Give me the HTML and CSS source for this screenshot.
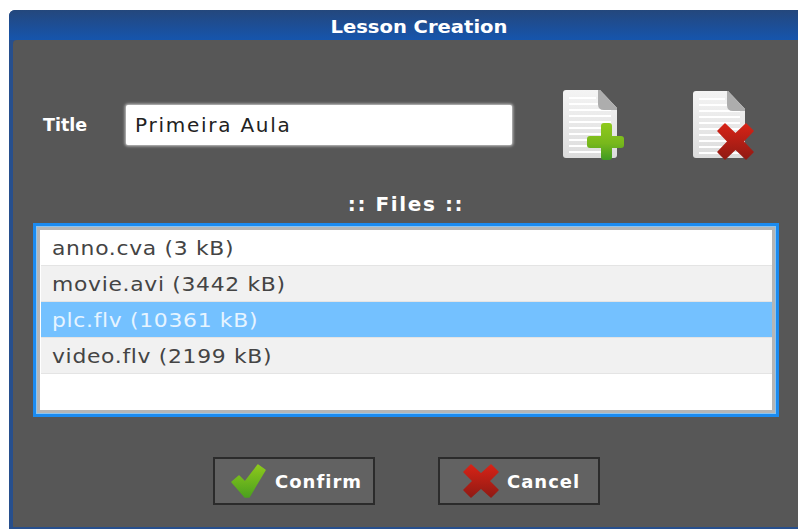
FILE: index.html
```html
<!DOCTYPE html>
<html lang="en">
<head>
<meta charset="utf-8">
<title>Lesson Creation</title>
<link rel="stylesheet" href="styles.css">
</head>
<body>
<div class="dialog">
  <header class="titlebar"><span class="titlebar-text">Lesson Creation</span></header>
  <main class="panel">
    <div class="title-row">
      <label class="title-label" for="lesson-title">Title</label>
      <input class="title-input" id="lesson-title" value="Primeira Aula">
      <div class="file-actions">
        <svg class="doc-icon" viewBox="0 0 62 70" width="62" height="70">
          <defs>
            <linearGradient id="greenA" gradientUnits="userSpaceOnUse" x1="0" y1="33" x2="0" y2="70"><stop offset="0" stop-color="#8fca1c"/><stop offset="0.55" stop-color="#78b81c"/><stop offset="1" stop-color="#3f9a22"/></linearGradient>
            <linearGradient id="pageA" x1="0" y1="0" x2="0" y2="1"><stop offset="0" stop-color="#f4f4f4"/><stop offset="1" stop-color="#dcdcdc"/></linearGradient>
          </defs>
          <path d="M4 0H38L55 18V65Q55 68 52 68H4Q1 68 1 65V3Q1 0 4 0Z" fill="url(#pageA)"/>
          <path d="M7 8H34M7 14H36M7 20H49M7 26H49M7 32H49M7 38H49M7 44H49M7 50H49M7 56H49M7 62H49" stroke="#fff" stroke-width="2.2"/>
          <path d="M36 0H38L55 18V20H42Q36 20 36 14Z" fill="#adadad"/>
          <g fill="url(#greenA)">
            <rect x="25" y="46" width="37" height="12" rx="3"/>
            <rect x="39" y="33" width="11" height="37" rx="3"/>
          </g>
        </svg>
        <svg class="doc-icon" viewBox="0 0 62 70" width="62" height="70">
          <defs>
            <linearGradient id="redA" gradientUnits="userSpaceOnUse" x1="0" y1="33" x2="0" y2="70"><stop offset="0" stop-color="#d92316"/><stop offset="1" stop-color="#8e1a14"/></linearGradient>
            <linearGradient id="pageB" x1="0" y1="0" x2="0" y2="1"><stop offset="0" stop-color="#f4f4f4"/><stop offset="1" stop-color="#dcdcdc"/></linearGradient>
          </defs>
          <path d="M4 1H36L53 19V65Q53 68 50 68H4Q1 68 1 65V4Q1 1 4 1Z" fill="url(#pageB)"/>
          <path d="M7 9H33M7 15H35M7 21H48M7 27H48M7 33H48M7 39H48M7 45H48M7 51H48M7 57H48M7 63H48" stroke="#fff" stroke-width="2.2"/>
          <path d="M35 1H36L53 19V21H41Q35 21 35 15Z" fill="#adadad"/>
          <path d="M26 41L33 34L43.500 44L54 34L61 41L51 51.500L61 62L54 69L43.500 59L33 69L26 62L36 51.500Z" fill="url(#redA)" stroke="url(#redA)" stroke-width="1.500" stroke-linejoin="round"/>
        </svg>
      </div>
    </div>
    <h2 class="files-heading">:: Files ::</h2>
    <ul class="file-list">
      <li class="file-row"><span class="file-name">anno.cva (3 kB)</span></li>
      <li class="file-row alt"><span class="file-name">movie.avi (3442 kB)</span></li>
      <li class="file-row selected"><span class="file-name">plc.flv (10361 kB)</span></li>
      <li class="file-row alt"><span class="file-name">video.flv (2199 kB)</span></li>
    </ul>
    <div class="buttons">
      <button class="btn btn-confirm" type="button">
        <svg viewBox="0 0 36 34" width="36" height="34">
          <defs><linearGradient id="greenB" gradientUnits="userSpaceOnUse" x1="0" y1="0" x2="0" y2="34"><stop offset="0" stop-color="#8fca1c"/><stop offset="1" stop-color="#4aa01e"/></linearGradient></defs>
          <path d="M1 18L8 12L14 18L27 1L34 6L18 33H14Z" fill="url(#greenB)" stroke="url(#greenB)" stroke-width="1.500" stroke-linejoin="round"/>
        </svg>
        Confirm
      </button>
      <button class="btn btn-cancel" type="button">
        <svg viewBox="0 0 36 34" width="36" height="34">
          <defs><linearGradient id="redB" gradientUnits="userSpaceOnUse" x1="0" y1="0" x2="0" y2="34"><stop offset="0" stop-color="#d92316"/><stop offset="1" stop-color="#8e1a14"/></linearGradient></defs>
          <path d="M1 8L8 1L18 10L28 1L35 8L26 17L35 26L28 33L18 24L8 33L1 26L10 17Z" fill="url(#redB)" stroke="url(#redB)" stroke-width="1.500" stroke-linejoin="round"/>
        </svg>
        Cancel
      </button>
    </div>
  </main>
</div>
</body>
</html>
```

FILE: styles.css
```css
html, body {
  margin: 0;
  height: 100%;
  background: #fff;
  overflow: hidden;
}

body {
  padding: 10px 0 0 9px;
  box-sizing: border-box;
  font-family: "DejaVu Sans", sans-serif;
}

.dialog {
  height: 519px;
  display: flex;
  flex-direction: column;
  border-radius: 6px 0 0 0;
  overflow: hidden;
  background: #274f8d;
  padding: 0 0 2px 4px;
  box-sizing: border-box;
}

.titlebar {
  flex: none;
  height: 30px;
  margin-left: -4px;
  display: flex;
  align-items: center;
  justify-content: center;
  padding: 3px 0 0 31px;
  box-sizing: border-box;
  background: linear-gradient(#24477c, #1655ad);
  color: #fff;
  font-size: 17px;
  font-weight: 700;
}

.titlebar-text {
  display: inline-block;
  transform: scaleX(1.15);
}

.panel {
  flex: 1;
  background: #575757;
  border-radius: 4px 0 0 0;
  padding: 50px 19px 0 20px;
  display: flex;
  flex-direction: column;
}

.title-row {
  display: flex;
  align-items: flex-start;
  height: 79px;
}

.title-label {
  flex: none;
  width: 83px;
  margin: 25px 0 0 10px;
  color: #fff;
  font-size: 17.5px;
  font-weight: 700;
}

.title-input {
  flex: none;
  width: 386px;
  height: 40px;
  margin-top: 15px;
  box-sizing: border-box;
  border: 0;
  border-radius: 2px;
  padding: 0 9px;
  background: #fff;
  box-shadow: 0 0 3px 1px #cfcfcf;
  color: #222;
  font: 20px "DejaVu Sans", sans-serif;
  letter-spacing: 1.75px;
  outline: none;
}

.file-actions {
  display: flex;
  gap: 68px;
  margin-left: 50px;
}

.doc-icon {
  flex: none;
}

.files-heading {
  margin: 22px 0 6px;
  height: 26px;
  line-height: 26px;
  text-align: center;
  color: #fff;
  font-size: 20px;
  font-weight: 700;
  letter-spacing: 1.6px;
}

.file-list {
  flex: none;
  width: 746px;
  height: 194px;
  margin: 0;
  padding: 4px 4px 3px 5px;
  box-sizing: border-box;
  list-style: none;
  background: #fff;
  border: 3px solid #1b8bf0;
  box-shadow: inset 0 0 0 1px #8cc4f0, inset 0 0 0 4px #b5b5b5;
}

.file-row {
  height: 36px;
  line-height: 37px;
  padding-left: 11px;
  box-sizing: border-box;
  border-bottom: 1px solid #e4e4e4;
  color: #444;
  font-size: 19px;
  letter-spacing: 0.6px;
}

.file-name {
  display: inline-block;
  transform: scaleX(1.15);
  transform-origin: left center;
}

.file-row.alt {
  background: #f1f1f1;
}

.file-row.selected {
  background: #74c1ff;
  color: #e6f4ff;
}

.buttons {
  display: flex;
  gap: 63px;
  margin: 40px 0 0 180px;
}

.btn {
  height: 48px;
  width: 162px;
  display: flex;
  align-items: center;
  box-sizing: border-box;
  border: 2px solid #2b2b2b;
  background: #626262;
  color: #fff;
  font: 700 18px "DejaVu Sans", sans-serif;
  letter-spacing: 1px;
  padding: 0;
}

.btn-confirm {
  gap: 8px;
  padding-left: 16px;
}

.btn-cancel {
  gap: 8px;
  padding-left: 23px;
}
```
